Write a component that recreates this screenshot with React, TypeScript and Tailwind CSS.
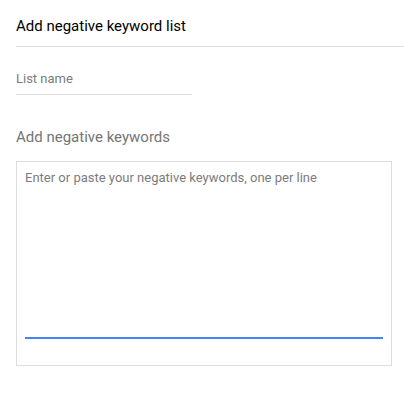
export default function App() {
  return (
    <main className="min-h-screen bg-white pb-12 pl-4 font-['Roboto',sans-serif]">
      <header className="border-b border-[#dddddd] pt-4 pb-2.5">
        <h1 className="text-[15px] leading-5 text-black">Add negative keyword list</h1>
      </header>
      <form className="pr-3">
        <input
          aria-label="List name"
          placeholder="List name"
          className="mt-5 block h-7 w-44 border-b border-[#dddddd] pb-1 text-[13px] leading-5 text-[#202020] outline-none placeholder:text-[#7c7c7c]"
        />
        <label htmlFor="keywords" className="mt-8 block text-[15px] leading-5 text-[#757575]">
          Add negative keywords
        </label>
        <div className="mt-3.5 border border-[#dddddd] px-2 pt-1.5 pb-[26px]">
          <textarea
            id="keywords"
            rows={8}
            placeholder="Enter or paste your negative keywords, one per line"
            className="block h-[171px] w-full resize-none border-b-2 border-[#4285f4] text-[13px] leading-5 text-[#202020] outline-none placeholder:text-[#7c7c7c]"
          />
        </div>
      </form>
    </main>
  );
}
